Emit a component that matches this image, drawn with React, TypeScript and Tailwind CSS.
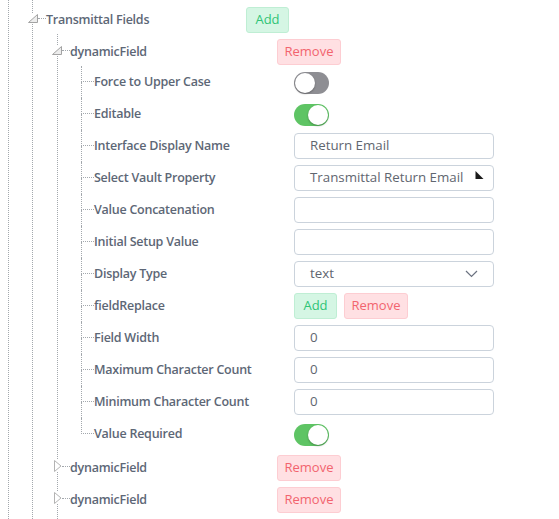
import React from "react";

const dot = "border-dotted border-[#a3a8ad]";
const labelCls = "text-[12.5px] font-semibold tracking-[-0.25px] text-[#5d6776] whitespace-nowrap";

function OpenArrow() {
  return (
    <svg width="10" height="9" viewBox="0 0 10 9" className="shrink-0">
      <polygon points="9.5,0.5 9.5,8.5 0.5,8.5" fill="#ededed" stroke="#a3a3a3" strokeWidth="1" />
    </svg>
  );
}

function ClosedArrow() {
  return (
    <svg width="9" height="12" viewBox="0 0 9 12" className="shrink-0">
      <polygon points="1.5,0.5 8,6 1.5,11.5" fill="#ffffff" stroke="#b3b3b3" strokeWidth="1" />
    </svg>
  );
}

function AddButton() {
  return (
    <button className="h-[26px] w-[43px] rounded-[3px] border border-[#bfeed4] bg-[#d5f6e4] text-[13px] text-[#2fc476]">
      Add
    </button>
  );
}

function RemoveButton() {
  return (
    <button className="h-[26px] w-[64px] rounded-[3px] border border-[#fdcdd2] bg-[#ffe0e3] text-[13px] text-[#f2646e]">
      Remove
    </button>
  );
}

function Toggle({ on }: { on: boolean }) {
  return (
    <div
      className={`mt-[2px] flex h-[22px] w-[35px] items-center rounded-full p-px ${
        on ? "justify-end bg-[#5ec464]" : "justify-start bg-[#8e8e93]"
      }`}
    >
      <div className="h-[20px] w-[20px] rounded-full bg-white shadow-[0_1px_2px_rgba(0,0,0,0.3)]" />
    </div>
  );
}

function TextInput({ value, children }: { value?: string; children?: React.ReactNode }) {
  return (
    <div className="flex h-[26px] w-[200px] items-center justify-between rounded-[4px] border border-[#cbd3dc] bg-white pl-[15px] pr-[16px] text-[13.3px] text-[#5f6670]">
      <span className="whitespace-nowrap">{value}</span>
      {children}
    </div>
  );
}

function Child({ label, last, children }: { label: string; last?: boolean; children: React.ReactNode }) {
  return (
    <div className="flex h-8">
      <div className="flex w-[13px] shrink-0 flex-col">
        <div className={`h-4 border-b border-l ${dot}`} />
        <div className={`h-4 ${last ? "" : `border-l ${dot}`}`} />
      </div>
      <div className="flex w-[200px] items-center">
        <span className={labelCls}>{label}</span>
      </div>
      <div className="flex items-center gap-[7px]">{children}</div>
    </div>
  );
}

function DynamicRow({ open }: { open?: boolean }) {
  return (
    <div className="flex h-8 items-center">
      <div className="-ml-[6px] flex w-[10px] justify-center bg-white">
        {open ? <OpenArrow /> : <ClosedArrow />}
      </div>
      <span className={`w-[8px] border-t ${dot}`} />
      <div className="w-[207px]">
        <span className={labelCls}>dynamicField</span>
      </div>
      <div className="pt-[3px]">
        <RemoveButton />
      </div>
    </div>
  );
}

export default function App() {
  return (
    <div className="h-[519px] overflow-hidden bg-white pl-2" style={{ fontFamily: '"Open Sans", "Noto Sans", sans-serif' }}>
      <div className={`h-full border-l ${dot} pl-[23px]`}>
        <div className={`h-full border-l ${dot} pt-[2px]`}>
          {/* Transmittal Fields */}
          <div className="flex h-8 items-center">
            <div className="-ml-[5px] flex w-[10px] bg-white">
              <OpenArrow />
            </div>
            <span className={`w-[8px] border-t ${dot}`} />
            <div className="w-[200px]">
              <span className={labelCls}>Transmittal Fields</span>
            </div>
            <div className="pt-[3px]">
              <AddButton />
            </div>
          </div>

          <div className={`ml-[24px] h-full border-l ${dot}`}>
            <DynamicRow open />
            <div className="ml-[23px]">
              <Child label="Force to Upper Case">
                <Toggle on={false} />
              </Child>
              <Child label="Editable">
                <Toggle on />
              </Child>
              <Child label="Interface Display Name">
                <TextInput value="Return Email" />
              </Child>
              <Child label="Select Vault Property">
                <TextInput value="Transmittal Return Email">
                  <svg width="9" height="9" viewBox="0 0 9 9" className="-mt-[6px] -mr-[7px]">
                    <polygon points="0.5,0 0.5,8 8.5,8" fill="#1a1a1a" />
                  </svg>
                </TextInput>
              </Child>
              <Child label="Value Concatenation">
                <TextInput />
              </Child>
              <Child label="Initial Setup Value">
                <TextInput />
              </Child>
              <Child label="Display Type">
                <TextInput value="text">
                  <svg width="13" height="8" viewBox="0 0 13 8" className="-mr-[1px]">
                    <polyline points="1,1 6.5,6.5 12,1" fill="none" stroke="#6b7280" strokeWidth="1.2" />
                  </svg>
                </TextInput>
              </Child>
              <Child label="fieldReplace">
                <AddButton />
                <RemoveButton />
              </Child>
              <Child label="Field Width">
                <TextInput value="0" />
              </Child>
              <Child label="Maximum Character Count">
                <TextInput value="0" />
              </Child>
              <Child label="Minimum Character Count">
                <TextInput value="0" />
              </Child>
              <Child label="Value Required" last>
                <Toggle on />
              </Child>
            </div>
            <DynamicRow />
            <DynamicRow />
            <DynamicRow />
          </div>
        </div>
      </div>
    </div>
  );
}
